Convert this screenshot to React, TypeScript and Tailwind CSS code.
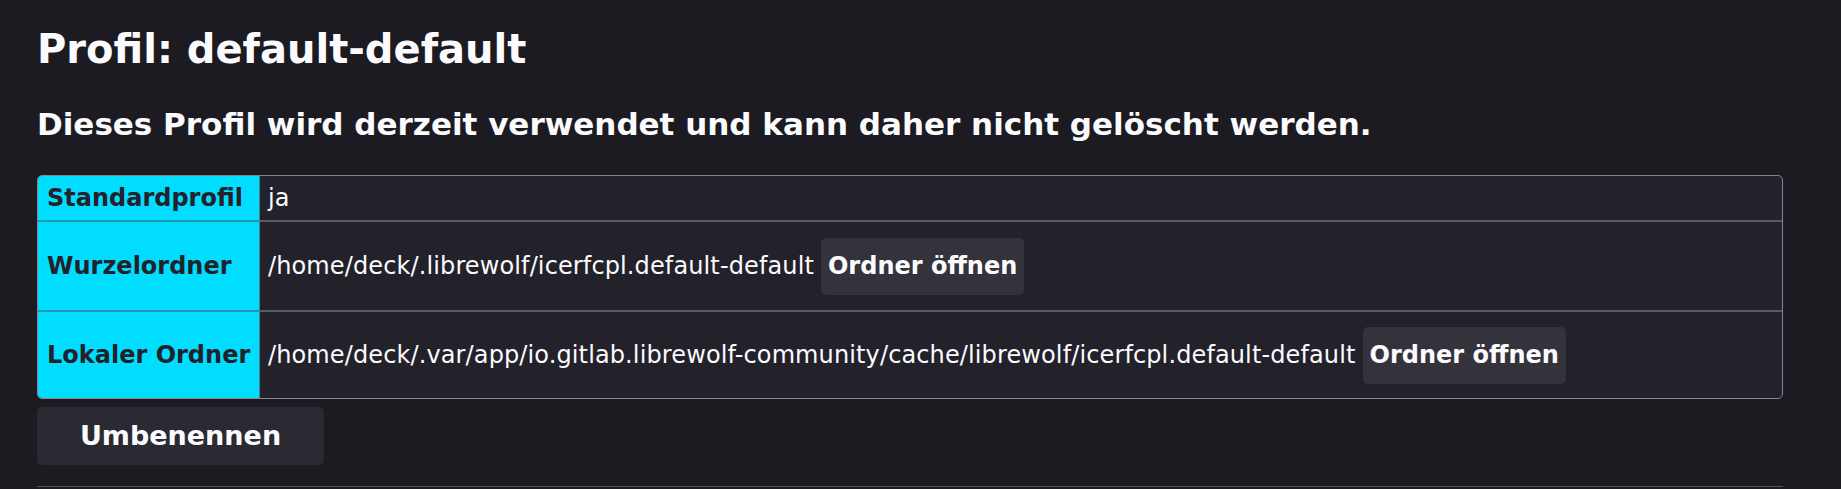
import React from "react";

interface Row {
	label: string;
	value: string;
	height: string;
	openButton?: boolean;
}

const rows: Row[] = [
	{ label: "Standardprofil", value: "ja", height: "h-[46px]" },
	{
		label: "Wurzelordner",
		value: "/home/deck/.librewolf/icerfcpl.default-default",
		height: "h-[90px]",
		openButton: true,
	},
	{
		label: "Lokaler Ordner",
		value: "/home/deck/.var/app/io.gitlab.librewolf-community/cache/librewolf/icerfcpl.default-default",
		height: "h-[86px]",
		openButton: true,
	},
];

function ProfileTable() {
	return (
		<div className="mt-[33px] border border-[#86868f] rounded-[5px] overflow-hidden bg-[#23222b]">
			{rows.map((row, i) => {
				const last = i === rows.length - 1;
				return (
					<div key={row.label} className={`flex ${row.height}`}>
						<div
							className={`w-[222px] shrink-0 flex items-center pl-[9px] bg-[#00ddff] text-[#23222b] font-bold text-[24px] border-r border-[#3f8595] ${
								last ? "" : "border-b-2 border-b-[#1d96a8]"
							}`}
						>
							{row.label}
						</div>
						<div
							className={`flex-1 flex items-center pl-[8px] text-[24px] whitespace-nowrap ${
								last ? "" : "border-b-2 border-b-[#5b5b66]"
							}`}
						>
							<span className="tracking-[0.12px]">{row.value}</span>
							{row.openButton && (
								<button className="ml-[7px] h-[57px] px-[7px] rounded-[5px] bg-[#34333b] font-bold text-[24px] text-[#fbfbfe]">
									Ordner öffnen
								</button>
							)}
						</div>
					</div>
				);
			})}
		</div>
	);
}

export default function App() {
	return (
		<div className="min-h-screen bg-[#1c1b22] text-[#fbfbfe] font-['DejaVu_Sans',sans-serif] overflow-hidden">
			<div className="ml-[37px] w-[1746px] pt-[26px]">
				<h1 className="text-[40px] leading-[47px] font-bold">Profil: default-default</h1>
				<h2 className="mt-[33px] text-[31px] leading-[36px] font-bold">
					Dieses Profil wird derzeit verwendet und kann daher nicht gelöscht werden.
				</h2>
				<ProfileTable />
				<button className="mt-[8px] w-[287px] h-[58px] rounded-[5px] bg-[#2b2a33] font-bold text-[27px] text-[#fbfbfe]">
					Umbenennen
				</button>
				<div className="mt-[21px] border-t border-[#52525e]" />
			</div>
		</div>
	);
}
